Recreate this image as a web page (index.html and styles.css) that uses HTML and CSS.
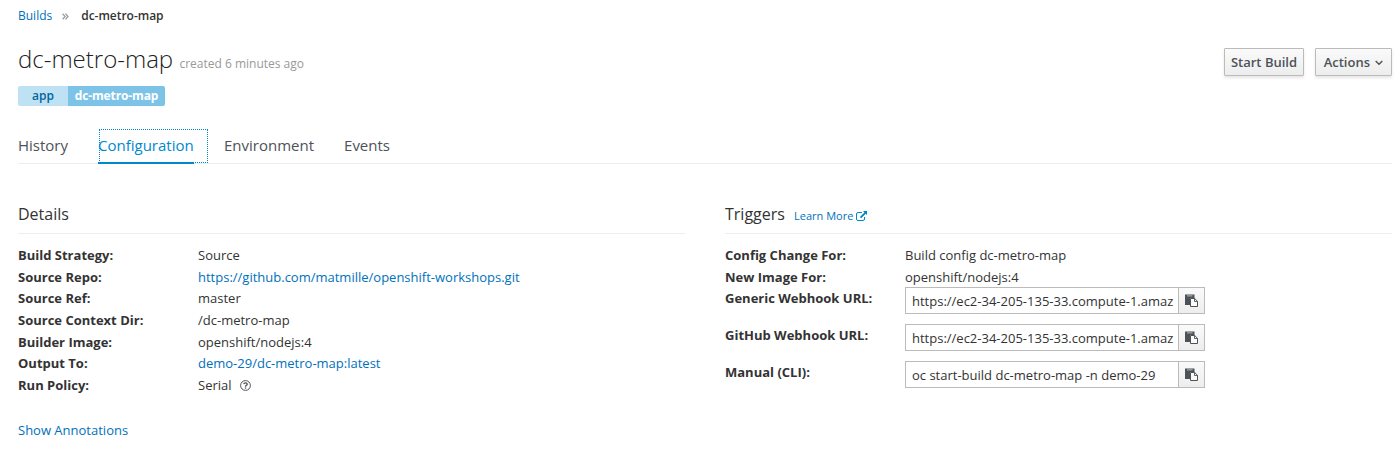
FILE: index.html
```html
<!DOCTYPE html>
<html lang="en">
<head>
<meta charset="utf-8">
<title>dc-metro-map</title>
<link rel="stylesheet" href="styles.css">
</head>
<body>
<svg class="defs" width="0" height="0">
  <symbol id="paste" viewBox="0 0 13 13">
    <path fill="#4d5258" d="M0 .5h9.500V4H5v7H0z"/>
    <path fill="#d5d6d8" d="M2 1.500h5.500v.8H2z"/>
    <path fill="#fafafa" stroke="#4d5258" d="M5.500 4.500h4.200l2.800 2.800v5.200h-7z"/>
    <path fill="none" stroke="#4d5258" stroke-width=".9" d="M9.500 4.500v3h3"/>
  </symbol>
</svg>
<main class="page">
  <nav class="breadcrumb">
    <a href="#">Builds</a>
    <svg class="crumb-sep" width="7" height="7" viewBox="0 0 8 8"><path d="M.7.700 3.500 4 .7 7.300M4 .700 6.800 4 4 7.300"/></svg>
    <strong>dc-metro-map</strong>
  </nav>
  <header class="heading">
    <h1>dc-metro-map <small>created 6 minutes ago</small></h1>
    <div class="actions">
      <button class="btn">Start Build</button>
      <button class="btn btn-menu">Actions <svg width="8" height="6" viewBox="0 0 8 6"><path d="M.7 1 4 4.300 7.300 1"/></svg></button>
    </div>
  </header>
  <div class="label-pair"><span class="key">app</span><span class="value">dc-metro-map</span></div>
  <ul class="tabs">
    <li>History</li>
    <li class="active"><span>Configuration</span></li>
    <li>Environment</li>
    <li>Events</li>
  </ul>
  <div class="columns">
    <section>
      <h2>Details</h2>
      <dl>
        <dt>Build Strategy:</dt><dd>Source</dd>
        <dt>Source Repo:</dt><dd><a href="#">https://github.com/matmille/openshift-workshops.git</a></dd>
        <dt>Source Ref:</dt><dd>master</dd>
        <dt>Source Context Dir:</dt><dd>/dc-metro-map</dd>
        <dt>Builder Image:</dt><dd>openshift/nodejs:4</dd>
        <dt>Output To:</dt><dd><a href="#">demo-29/dc-metro-map:latest</a></dd>
        <dt>Run Policy:</dt><dd>Serial <svg class="help" width="11" height="11" viewBox="0 0 11 11"><circle cx="5.500" cy="5.500" r="4.900"/><path class="hook" d="M3.700 4.200C4 2.500 7.300 2.500 7.200 4.400 7.100 5.400 5.600 5.300 5.500 6.700"/><path class="hook" d="M5.500 7.400v1.300"/></svg></dd>
      </dl>
      <a class="annotations" href="#">Show Annotations</a>
    </section>
    <section>
      <h2>Triggers <a class="learn" href="#">Learn More <svg width="11" height="10" viewBox="0 0 11 10"><path class="box" d="M6 1.500H2Q.5 1.500.5 3v5Q.5 9.500 2 9.500h5Q8.500 9.500 8.500 8V6"/><path class="arrow" d="M7 0h4v4L9.700 2.700 5.200 7.200 3.900 5.900 8.400 1.400z"/></svg></a></h2>
      <dl>
        <dt>Config Change For:</dt><dd>Build config dc-metro-map</dd>
        <dt>New Image For:</dt><dd>openshift/nodejs:4</dd>
        <dt>Generic Webhook URL:</dt><dd class="copy"><div class="field"><span>https://ec2-34-205-135-33.compute-1.amaz</span></div><button class="clip"><svg width="13" height="13"><use href="#paste"/></svg></button></dd>
        <dt>GitHub Webhook URL:</dt><dd class="copy"><div class="field"><span>https://ec2-34-205-135-33.compute-1.amaz</span></div><button class="clip"><svg width="13" height="13"><use href="#paste"/></svg></button></dd>
        <dt>Manual (CLI):</dt><dd class="copy"><div class="field"><span>oc start-build dc-metro-map -n demo-29</span></div><button class="clip"><svg width="13" height="13"><use href="#paste"/></svg></button></dd>
      </dl>
    </section>
  </div>
</main>
</body>
</html>
```
FILE: styles.css
```css
* { box-sizing: border-box; }
body {
  margin: 0;
  height: 462px;
  overflow: hidden;
  background: #fff;
  color: #333;
  font: 13px/21.67px "Open Sans", sans-serif;
}
.defs { display: block; }
a { color: #0071bc; text-decoration: none; }
.page { padding: 5px 8px 0 18px; }
.breadcrumb { display: flex; align-items: center; height: 22px; font-size: 12px; }
.breadcrumb strong { font-weight: 600; letter-spacing: -.03px; }
.crumb-sep { margin: 1px 12px 0 10px; fill: none; stroke: #9c9c9c; stroke-width: 1.500; }
.heading { display: flex; justify-content: space-between; height: 59px; padding-top: 15px; }
h1 { margin: 0; font-size: 24px; font-weight: 300; line-height: 34px; color: #222; }
h1 small { font-size: 12px; font-weight: 400; color: #999; }
.actions { display: flex; gap: 11px; padding-top: 6px; }
.btn {
  height: 28px;
  width: 80px;
  padding: 0;
  border: 1px solid #bbb;
  border-radius: 1px;
  background: linear-gradient(#fafafa, #ededed);
  box-shadow: 0 2px 3px rgba(3, 3, 3, .1);
  color: #4d5258;
  font: 600 13px/24px "Open Sans", sans-serif;
}
.btn-menu { width: 77px; }
.btn svg { margin: 0 0 1px 2px; fill: none; stroke: #4d5258; stroke-width: 1.400; }
.label-pair { display: flex; width: 147px; height: 20px; border-radius: 2px; overflow: hidden; font-size: 12px; line-height: 19px; text-align: center; }
.key { width: 50px; background: #bee1f4; color: #00659c; font-weight: 600; }
.value { flex: 1; background: #7dc3e8; color: #fff; font-weight: 700; letter-spacing: -.13px; }
.tabs { display: flex; gap: 30px; height: 58px; margin: 0; padding: 23px 0 0; border-bottom: 1px solid #ededed; list-style: none; font-size: 15px; line-height: 33px; color: #4d5258; }
.active { width: 96px; color: #0088ce; position: relative; }
.active span { display: block; height: 35px; border-bottom: 2px solid #0088ce; }
.active::after { content: ""; position: absolute; inset: 0 -14px 0 1px; border: 1px dotted #0088ce; }
.columns { display: grid; grid-template-columns: 1fr 1fr; gap: 40px; padding-top: 38px; }
h2 { height: 32px; margin: 0 0 11px; border-bottom: 1px solid #ededed; font-size: 16px; font-weight: 400; line-height: 24px; }
.learn { margin-left: 5px; font-size: 11px; }
.learn svg { margin-left: 0; vertical-align: -1px; }
.box { fill: none; stroke: #0088ce; }
.arrow { fill: #0088ce; }
dl { display: grid; grid-template-columns: 180px 1fr; margin: 0; }
dt { font-weight: 700; }
dd { margin: 0; }
.help { margin-left: 5px; vertical-align: -1px; fill: none; stroke: #4d5258; }
.hook { stroke-width: 1.300; }
.annotations { display: block; margin-top: 23px; }
.copy { display: flex; width: 300px; height: 37px; margin-top: -1px; margin-bottom: 1px; }
.copy:nth-last-child(n+2) { margin-bottom: 1px; }
.field { width: 274px; height: 27px; padding: 0 6px; border: 1px solid #bbb; line-height: 27px; }
.field span { display: block; white-space: nowrap; }
.clip { display: grid; place-items: center; width: 26px; height: 27px; padding: 0; border: 1px solid #bbb; border-left: 0; background: linear-gradient(#fafafa, #ededed); }
```
